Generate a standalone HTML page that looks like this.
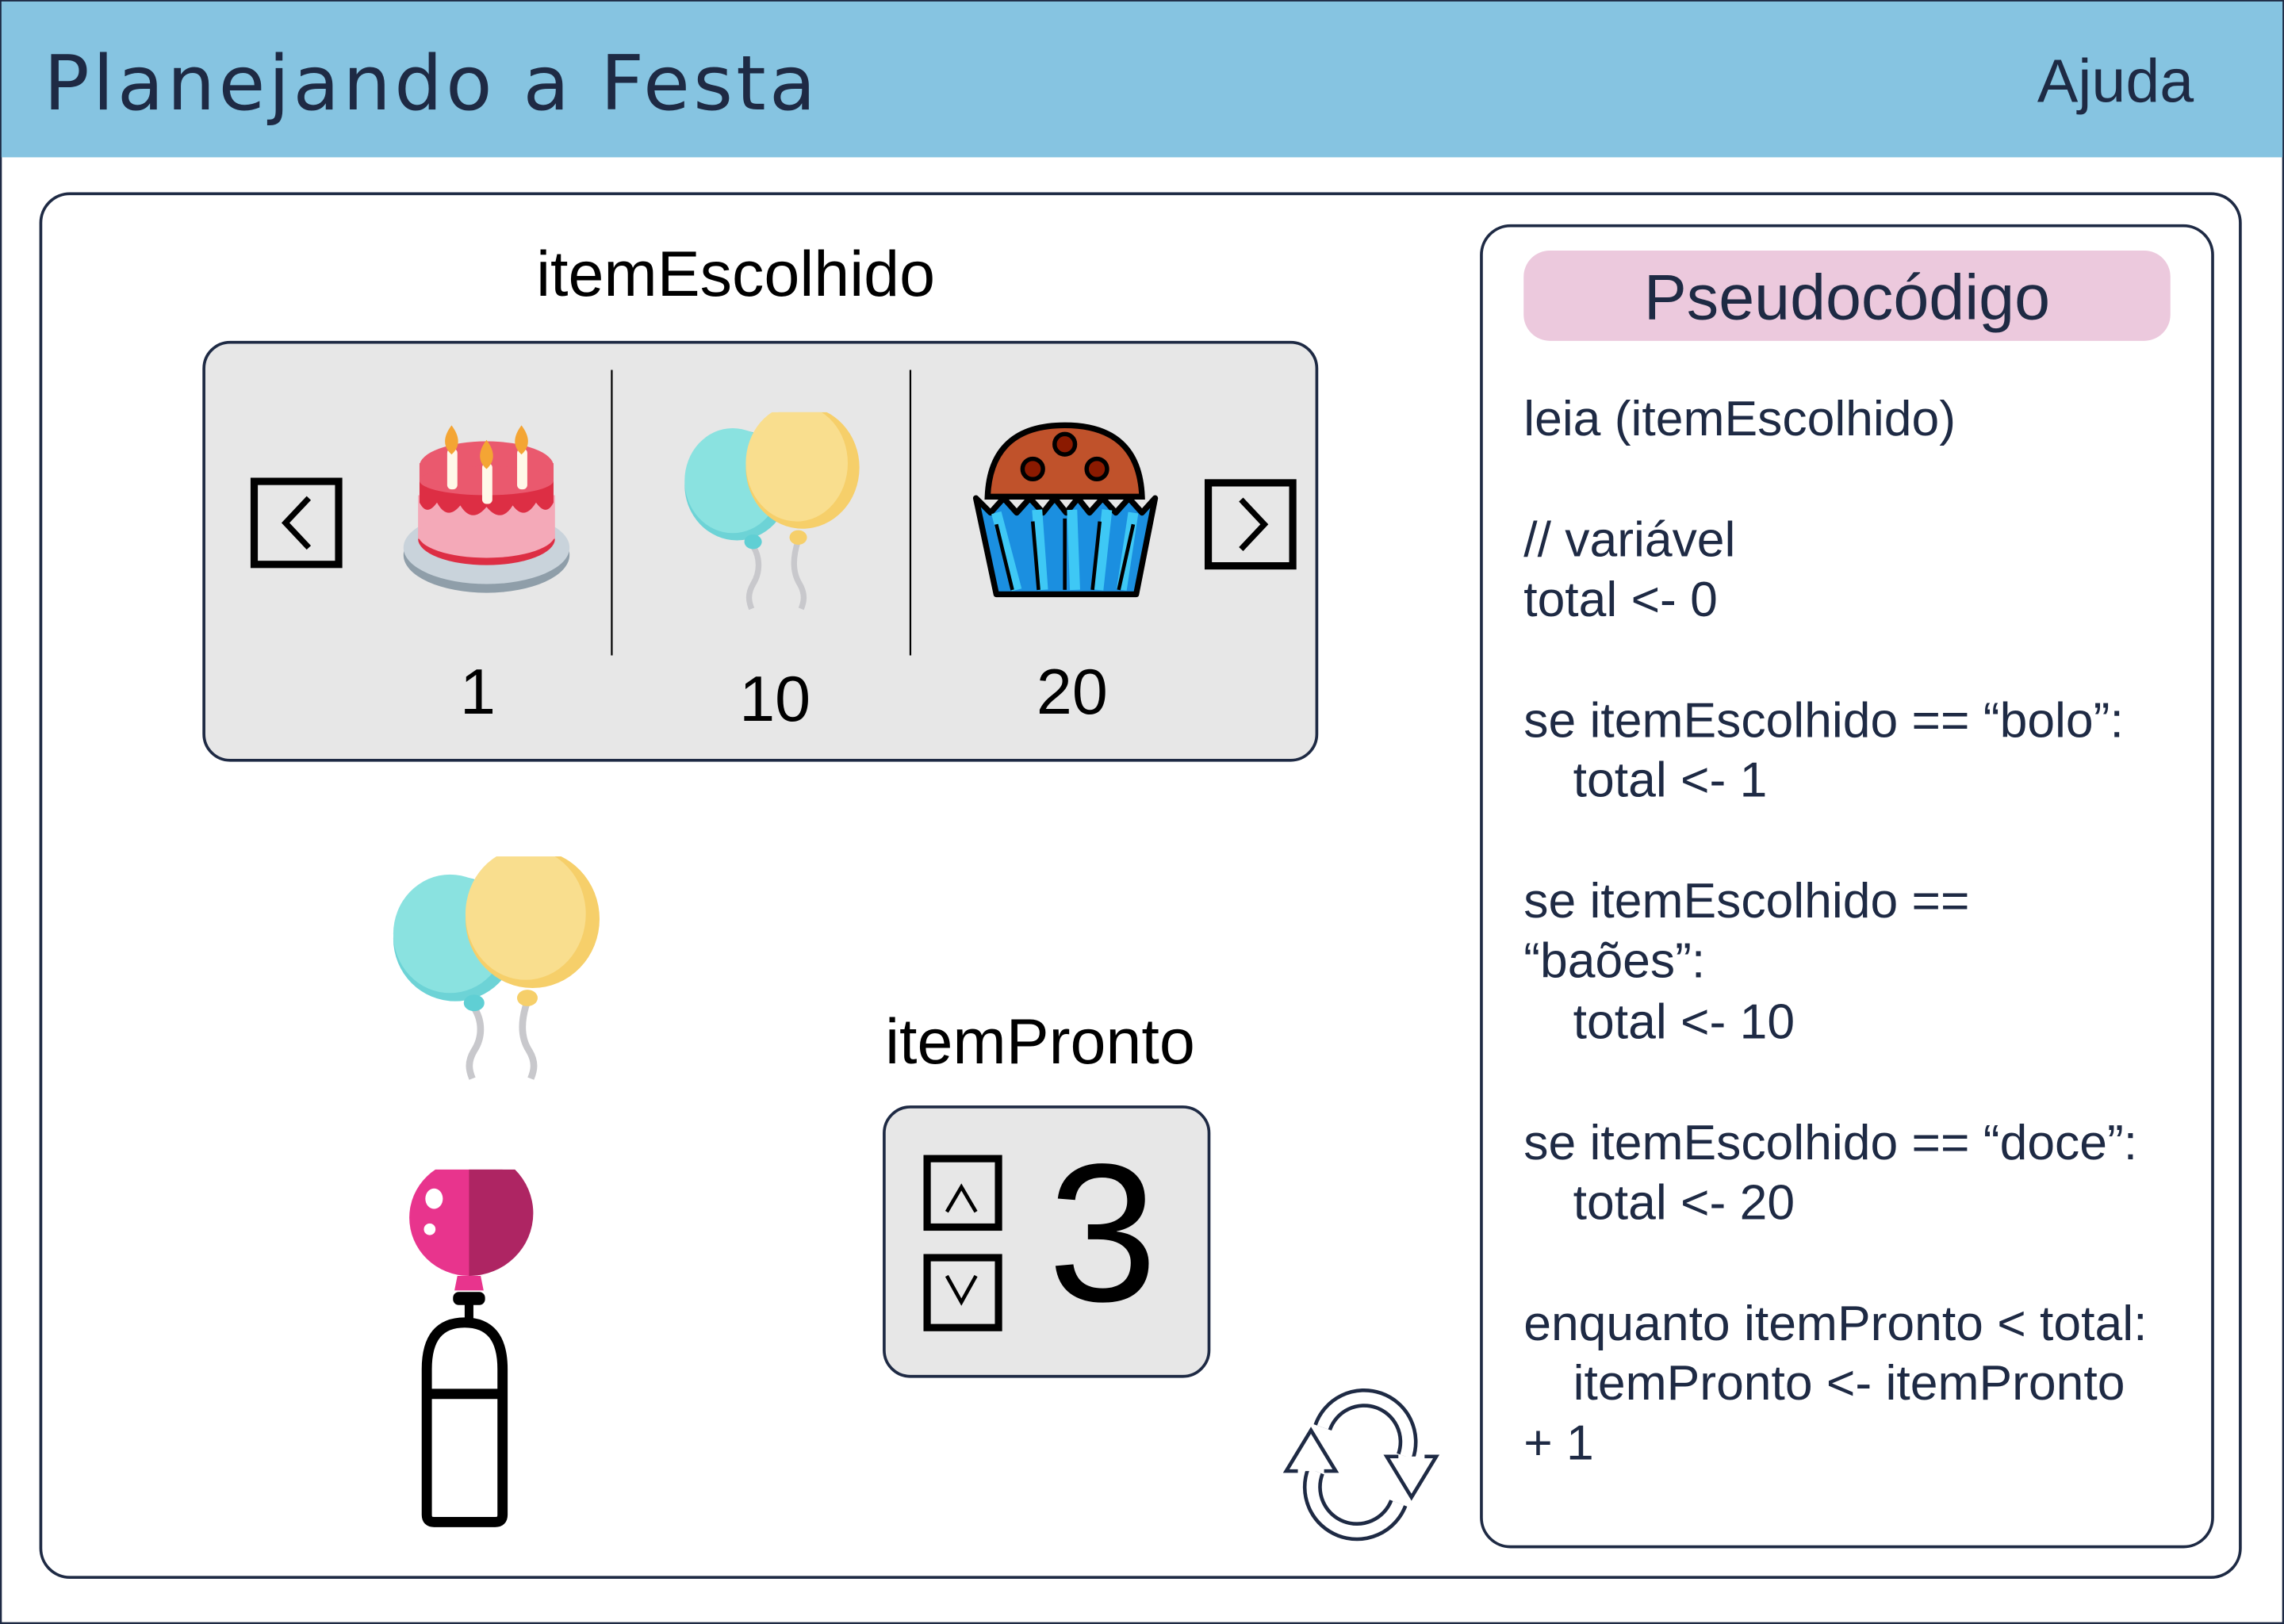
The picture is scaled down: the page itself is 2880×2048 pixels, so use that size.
<!DOCTYPE html>
<html><head><meta charset="utf-8"><style>
html,body{margin:0;padding:0;background:#fff}
svg{display:block}
text{font-family:"Liberation Sans",sans-serif}
</style></head><body>
<svg width="2880" height="2048" viewBox="0 0 1568 1115" xmlns="http://www.w3.org/2000/svg">
<defs>
<clipPath id="ct"><rect x="-10" y="0" width="200" height="200"/></clipPath>
<g id="bal">
 <g clip-path="url(#ct)">
  <ellipse cx="36" cy="50" rx="36" ry="38" fill="#6dd3d6"/>
  <ellipse cx="33" cy="47" rx="33" ry="36" fill="#8ae2e0"/>
  <ellipse cx="81" cy="38" rx="39" ry="42" fill="#f6cf6a"/>
  <ellipse cx="77" cy="35" rx="35" ry="40" fill="#f9de8e"/>
 </g>
 <path d="M47 92 C52 100 52 110 47 118 C43 125 44 130 46 135" stroke="#c8c8cc" stroke-width="4" fill="none"/>
 <path d="M78 88 C74 100 74 110 79 118 C83 125 82 130 80 135" stroke="#c8c8cc" stroke-width="4" fill="none"/>
 <ellipse cx="47" cy="89" rx="6" ry="5" fill="#5fcfd4"/>
 <ellipse cx="78" cy="86" rx="6" ry="5" fill="#f6cf6a"/>
</g>
</defs>
<rect x="0.5" y="0.5" width="1567" height="1114" fill="#fff" stroke="#1e2a44" stroke-width="1.5"/>
<rect x="1" y="1" width="1566" height="107" fill="#86c4e1"/>
<text x="30" y="75" font-size="52" fill="#1e2a44" style="font-family:'DejaVu Sans',sans-serif" textLength="530">Planejando a Festa</text>
<text x="1506" y="70" font-size="42" fill="#1e2a44" text-anchor="end">Ajuda</text>

<rect x="28" y="133" width="1510" height="950" rx="20" fill="#fff" stroke="#1e2a44" stroke-width="2"/>
<rect x="1017" y="155" width="502" height="907" rx="20" fill="#fff" stroke="#1e2a44" stroke-width="2"/>
<rect x="1046" y="172" width="444" height="62" rx="18" fill="#ecc9dd"/>
<text x="1268" y="219" font-size="44" fill="#1e2a44" text-anchor="middle">Pseudocódigo</text>
<g font-size="34" fill="#1e2a44">
<text x="1046" y="299">leia (itemEscolhido)</text>
<text x="1046" y="382">// variável</text>
<text x="1046" y="423">total &lt;- 0</text>
<text x="1046" y="506">se itemEscolhido == “bolo”:</text>
<text x="1080" y="547">total &lt;- 1</text>
<text x="1046" y="630">se itemEscolhido ==</text>
<text x="1046" y="671">“baões”:</text>
<text x="1080" y="713">total &lt;- 10</text>
<text x="1046" y="796">se itemEscolhido == “doce”:</text>
<text x="1080" y="837">total &lt;- 20</text>
<text x="1046" y="920">enquanto itemPronto &lt; total:</text>
<text x="1080" y="961">itemPronto &lt;- itemPronto</text>
<text x="1046" y="1002">+ 1</text>
</g>

<text x="505" y="203" font-size="44" fill="#000" text-anchor="middle">itemEscolhido</text>
<rect x="140" y="235" width="764" height="287" rx="18" fill="#e7e7e7" stroke="#1e2a44" stroke-width="2"/>
<line x1="420" y1="254" x2="420" y2="450" stroke="#000" stroke-width="1.2"/>
<line x1="625" y1="254" x2="625" y2="450" stroke="#000" stroke-width="1.2"/>
<rect x="174.5" y="330.5" width="58" height="57" fill="none" stroke="#000" stroke-width="5"/>
<path d="M212 342 L196 359 L212 376" fill="none" stroke="#000" stroke-width="4"/>
<rect x="829.5" y="331.5" width="58" height="57" fill="none" stroke="#000" stroke-width="5"/>
<path d="M852 343 L868 360 L852 377" fill="none" stroke="#000" stroke-width="4"/>
<g font-size="44" fill="#000" text-anchor="middle">
<text x="328" y="490">1</text><text x="532" y="495">10</text><text x="736" y="490">20</text>
</g>

<!-- cake -->
<ellipse cx="334" cy="381" rx="57" ry="26" fill="#8f9ea9"/>
<ellipse cx="334" cy="376" rx="57" ry="25" fill="#c9d3db"/>
<ellipse cx="334" cy="370" rx="47" ry="18" fill="#dd2e44"/>
<rect x="287" y="340" width="94" height="30" fill="#f4a9b8"/>
<ellipse cx="334" cy="367" rx="47" ry="16" fill="#f4a9b8"/>
<path d="M288 320 L380 320 L380 345 Q375 355 368 345 Q360 358 352 347 Q344 360 334 348 Q324 360 316 347 Q307 358 300 345 Q293 355 288 345Z" fill="#dd2e44"/>
<ellipse cx="334" cy="320" rx="46" ry="17" fill="#ea596e"/>
<rect x="288" y="318" width="92" height="12" fill="#ea596e"/>
<ellipse cx="334" cy="330" rx="46" ry="10" fill="#ea596e"/>
<rect x="307" y="308" width="7" height="28" rx="3" fill="#fff8e8"/>
<rect x="355" y="308" width="7" height="28" rx="3" fill="#fff8e8"/>
<rect x="331" y="318" width="7" height="28" rx="3" fill="#fff8e8"/>
<path d="M310 292 Q319 304 310 312 Q301 304 310 292Z" fill="#f4a534"/>
<path d="M358 292 Q367 304 358 312 Q349 304 358 292Z" fill="#f4a534"/>
<path d="M334 302 Q343 314 334 322 Q325 314 334 302Z" fill="#f4a534"/>

<use href="#bal" transform="translate(470,283)"/>

<!-- cupcake -->
<path d="M678 341 Q680 292 731 292 Q782 292 784 341 Z" fill="#c0522b" stroke="#000" stroke-width="4"/>
<circle cx="731" cy="305" r="7" fill="#8b1a00" stroke="#000" stroke-width="3"/>
<circle cx="709" cy="322" r="7" fill="#8b1a00" stroke="#000" stroke-width="3"/>
<circle cx="753" cy="322" r="7" fill="#8b1a00" stroke="#000" stroke-width="3"/>
<path d="M670 342 L680 352 L689 342 L698 352 L707 342 L716 352 L724 342 L732 352 L740 342 L748 352 L757 342 L766 352 L775 342 L784 352 L793 342 L780 408 L684 408 Z" fill="#1b8fe0" stroke="#000" stroke-width="4" stroke-linejoin="round"/>
<path d="M684 352 L698 405 M712 350 L716 405 M736 350 L738 405 M760 350 L754 405 M778 352 L770 405" stroke="#3ec8f5" stroke-width="7"/>
<path d="M684 360 L695 405 M709 358 L713 405 M731 356 L731 405 M755 358 L750 405 M778 360 L768 405" stroke="#000" stroke-width="2.5"/>

<use href="#bal" transform="translate(270,588) scale(1.18,1.13)"/>

<!-- pink balloon + tank -->
<clipPath id="pc"><rect x="270" y="803" width="100" height="80"/></clipPath>
<g clip-path="url(#pc)">
<ellipse cx="322" cy="836" rx="41" ry="40" fill="#e8348d"/>
<path d="M322 790 A41 40 0 0 1 322 876 Z" fill="#ae2563"/>
</g>
<ellipse cx="298" cy="823" rx="6" ry="7" fill="#fff"/>
<circle cx="295" cy="844" r="4" fill="#fff"/>
<path d="M314 876 L330 876 L332 886 L312 886 Z" fill="#e8348d"/>
<rect x="311" y="887" width="22" height="9" rx="4" fill="#000"/>
<rect x="319" y="894" width="6" height="14" fill="#000"/>
<path d="M293 1040 L293 940 Q293 908 319 908 Q345 908 345 940 L345 1040 Q345 1045 340 1045 L298 1045 Q293 1045 293 1040Z" fill="none" stroke="#000" stroke-width="7"/>
<line x1="293" y1="957" x2="345" y2="957" stroke="#000" stroke-width="7"/>

<text x="714" y="730" font-size="44" fill="#000" text-anchor="middle">itemPronto</text>
<rect x="607" y="760" width="223" height="185" rx="18" fill="#e7e7e7" stroke="#1e2a44" stroke-width="2"/>
<rect x="636.5" y="795.5" width="49" height="47" fill="none" stroke="#000" stroke-width="5"/>
<path d="M650 832 L660 815 L670 832" fill="none" stroke="#000" stroke-width="2.5"/>
<rect x="636.5" y="863.5" width="49" height="48" fill="none" stroke="#000" stroke-width="5"/>
<path d="M650 876 L660 894 L670 876" fill="none" stroke="#000" stroke-width="2.5"/>
<text x="757" y="893" font-size="135" fill="#000" text-anchor="middle">3</text>

<!-- refresh -->
<g stroke-linejoin="miter">
<path d="M908 980 A30 30 0 0 1 965 1000" fill="none" stroke="#1e2a44" stroke-width="13"/>
<path d="M908 980 A30 30 0 0 1 965 1000" fill="none" stroke="#fff" stroke-width="8"/>
<path d="M960 1000 L952 1000 L969 1028 L986 1000 L978 1000" fill="#fff" stroke="#1e2a44" stroke-width="2.5"/>
<path d="M960 1032 A30 30 0 0 1 903 1010" fill="none" stroke="#1e2a44" stroke-width="13"/>
<path d="M960 1032 A30 30 0 0 1 903 1010" fill="none" stroke="#fff" stroke-width="8"/>
<path d="M909 1010 L917 1010 L900 982 L883 1010 L891 1010" fill="#fff" stroke="#1e2a44" stroke-width="2.5"/>
</g>
</svg>
</body></html>
